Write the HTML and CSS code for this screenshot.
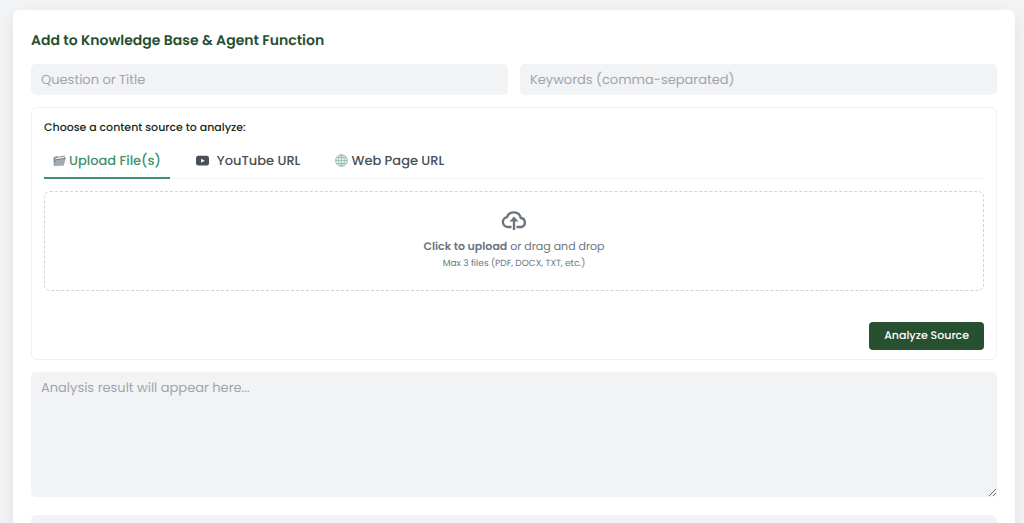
FILE: index.html
```html
<!DOCTYPE html>
<html lang="en">

<head>
    <meta charset="UTF-8">
    <meta name="viewport" content="width=device-width, initial-scale=1.0">
    <title>Knowledge Base</title>
    <link rel="stylesheet" href="styles.css">
</head>

<body>
    <form class="card">
        <h2>Add to Knowledge Base &amp; Agent Function</h2>
        <div class="field-row">
            <input class="field" type="text" name="title" placeholder="Question or Title" aria-label="Question or Title">
            <input class="field" type="text" name="keywords" placeholder="Keywords (comma-separated)" aria-label="Keywords (comma-separated)">
        </div>

        <section class="source-box">
            <h3>Choose a content source to analyze:</h3>
            <div class="tabs" role="tablist">
                <button type="button" class="tab active" role="tab" aria-selected="true">
                    <svg class="tab-icon" viewBox="0 0 13 13" aria-hidden="true">
                        <path d="M.5 3.500 4 2l1 .8L11.500 1.500l.5 3-1.500 7H.8z" fill="#858c93" />
                        <path d="M2.500 4 11 2.500v3H2.500z" fill="#e3e6e8" />
                        <path d="M3 5.500 12.800 4l-1.800 7-10 1z" fill="#a4abb1" />
                        <path d="M3 5.500 12.800 4l-.2.8L2.800 6.300z" fill="#6d767e" />
                    </svg>
                    <span>Upload File(s)</span>
                </button>
                <button type="button" class="tab tab-video" role="tab" aria-selected="false">
                    <svg class="tab-icon" viewBox="0 0 14 12" aria-hidden="true">
                        <rect x="0" y="1" width="14" height="10.500" rx="2.500" fill="#495057" />
                        <path d="M5.500 4v4.500l4-2.250z" fill="#fff" />
                    </svg>
                    <span>YouTube URL</span>
                </button>
                <button type="button" class="tab" role="tab" aria-selected="false">
                    <svg class="tab-icon" viewBox="0 0 13 13" aria-hidden="true">
                        <circle cx="6.500" cy="6.500" r="5.800" fill="#e9f2ef" stroke="#8dbdab" />
                        <path d="M6.500.7v11.600M.7 6.500h11.600M1.700 3.500h9.600M1.700 9.500h9.600M6.500.7c-4 3.500-4 8 0 11.600M6.500.7c4 3.500 4 8 0 11.600" fill="none" stroke="#8dbdab" stroke-width=".8" />
                    </svg>
                    <span>Web Page URL</span>
                </button>
            </div>

            <label class="drop-zone">
                <input type="file" class="file-input" name="files" multiple>
                <svg class="upload-icon" viewBox="0 0 26 22" aria-hidden="true">
                    <path d="M10.500 18H6.500A5 5 0 0 1 6 8.100 7.200 7.200 0 0 1 19.800 9 4.600 4.600 0 0 1 20.500 18H15.500" fill="none" stroke="#6c757d" stroke-width="2.400" />
                    <path d="M13 21V10" fill="none" stroke="#6c757d" stroke-width="2.400" />
                    <path d="M8.500 12.500 13 7.500l4.500 5z" fill="#6c757d" />
                </svg>
                <span class="drop-text"><strong>Click to upload</strong> or drag and drop</span>
                <span class="drop-hint">Max 3 files (PDF, DOCX, TXT, etc.)</span>
            </label>

            <div class="actions">
                <button type="button" class="analyze-btn">Analyze Source</button>
            </div>
        </section>

        <textarea class="field result" name="result" placeholder="Analysis result will appear here..." aria-label="Analysis result"></textarea>
        <input class="field" type="text" name="details" aria-label="Details">
    </form>
</body>

</html>
```
FILE: styles.css
```css
* {
    box-sizing: border-box;
}

html {
    scrollbar-width: none;
}

body {
    margin: 0;
    padding: 10px 9px 12px 13px;
    font-family: Poppins, Inter, sans-serif;
    text-rendering: geometricPrecision;
    background-color: #f1f3f5;
    color: #1b2a22;
}

button,
input,
textarea {
    font-family: inherit;
    text-rendering: inherit;
}

.card {
    padding: 20px 18px;
    background-color: #fff;
    border-radius: 6px;
    box-shadow: 0 6px 16px rgba(0, 0, 0, 0.08);
}

h2 {
    margin: 0 0 13px;
    font-size: 14px;
    line-height: 21px;
    font-weight: 600;
    color: #265030;
}

.field-row {
    display: flex;
    gap: 12px;
    margin-bottom: 12px;
}

.field {
    display: block;
    width: 100%;
    min-width: 0;
    height: 31px;
    padding: 6px 10px;
    font-size: 13px;
    line-height: 20px;
    color: #343a40;
    background-color: #f1f3f5;
    border: none;
    border-radius: 5px;
}

.field::placeholder {
    color: #9fa5ac;
    opacity: 1;
}

.source-box {
    padding: 11px 12px 9px;
    border: 1px solid #eff1f3;
    border-radius: 6px;
}

h3 {
    margin: 0 0 6px;
    font-size: 11px;
    line-height: 16px;
    font-weight: 500;
}

.tabs {
    display: flex;
    gap: 17px;
    margin-bottom: 12px;
    border-bottom: 1px solid #f1f3f5;
}

.tab {
    display: flex;
    align-items: center;
    gap: 3px;
    height: 38px;
    margin-bottom: -1px;
    padding: 3px 9px 0;
    font-size: 13px;
    font-weight: 500;
    color: #495057;
    background: none;
    border: none;
    border-bottom: 2px solid transparent;
    cursor: pointer;
}

.tab.active {
    color: #40916c;
    border-bottom-color: #40916c;
}

.tab-video {
    gap: 8px;
}

.tab-icon {
    width: 13px;
    height: 13px;
}

.drop-zone {
    display: flex;
    flex-direction: column;
    align-items: center;
    padding: 17px 12px 18px;
    border: 1px dashed #ced4da;
    border-radius: 6px;
    color: #6c757d;
    cursor: pointer;
}

.file-input {
    display: none;
}

.upload-icon {
    width: 26px;
    height: 22px;
    margin-bottom: 5px;
}

.drop-text {
    font-size: 11px;
    line-height: 20px;
}

.drop-text strong {
    font-weight: 600;
}

.drop-hint {
    font-size: 9px;
    line-height: 16px;
}

.actions {
    display: flex;
    justify-content: flex-end;
    margin-top: 31px;
}

.analyze-btn {
    height: 28px;
    padding: 0 15px 1px;
    font-size: 11px;
    font-weight: 500;
    color: #fff;
    background-color: #265030;
    border: none;
    border-radius: 4px;
    cursor: pointer;
}

.result {
    height: 125px;
    margin: 12px 0 18px;
    resize: vertical;
}
```
